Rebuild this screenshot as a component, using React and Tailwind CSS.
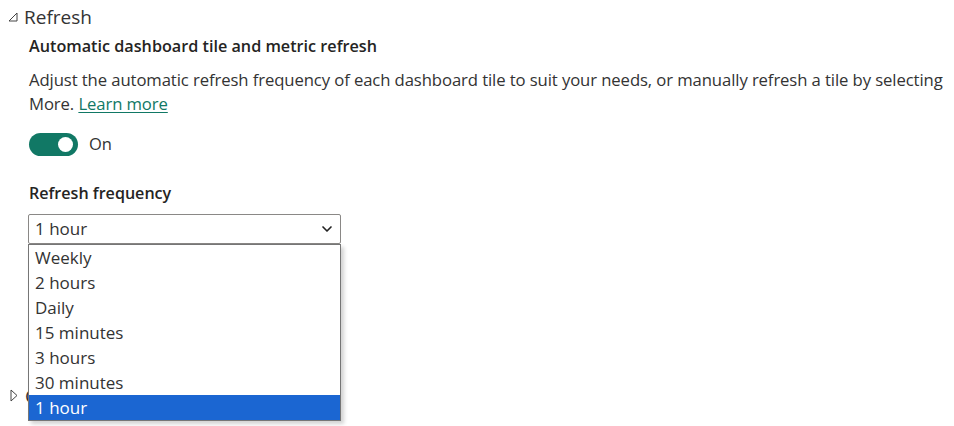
import React, { useState } from "react";
import { ChevronDown } from "lucide-react";

const OPTIONS = ["Weekly", "2 hours", "Daily", "15 minutes", "3 hours", "30 minutes", "1 hour"];

function ExpandedCaret() {
  return (
    <svg width="10" height="10" viewBox="0 0 10 10" className="shrink-0">
      <polygon points="9,1 9,9 1,9" fill="none" stroke="#444" strokeWidth="1" strokeLinejoin="round" />
    </svg>
  );
}

function CollapsedCaret() {
  return (
    <svg width="8" height="13" viewBox="0 0 8 13" className="shrink-0">
      <polygon points="1,1 7,6.5 1,12" fill="none" stroke="#444" strokeWidth="1" strokeLinejoin="round" />
    </svg>
  );
}

export default function App() {
  const [on, setOn] = useState(true);
  const [value, setValue] = useState("1 hour");

  return (
    <div
      className="relative w-[954px] h-[426px] overflow-hidden bg-white text-[#333]"
      style={{ fontFamily: '"Segoe UI", "Open Sans", "Noto Sans", sans-serif' }}
    >
      {/* Refresh section */}
      <div className="flex items-center gap-[6px] pl-[8px] pt-[3px] h-[30px]">
        <ExpandedCaret />
        <span className="text-[19px] leading-[26px] text-[#333]">Refresh</span>
      </div>

      <div className="pl-[29px] pr-[4px]">
        <h3 className="mt-[5px] text-[16.2px] leading-[22px] font-semibold text-[#252423]">
          Automatic dashboard tile and metric refresh
        </h3>
        <p className="mt-[11px] text-[16.7px] leading-[24px] text-[#333] tracking-[-0.1px] whitespace-nowrap">
          Adjust the automatic refresh frequency of each dashboard tile to suit your needs, or manually refresh a tile by selecting
          <br />
          More.{" "}
          <a href="#" className="text-[#117865] underline underline-offset-2">Learn more</a>
        </p>

        <div className="mt-[16px] flex items-center gap-[11px]">
          <button
            onClick={() => setOn(v => !v)}
            className="flex items-center justify-end w-[49px] h-[23px] rounded-full bg-[#117865] px-[5px]"
          >
            <span className="block w-[15px] h-[15px] rounded-full bg-white" />
          </button>
          <span className="text-[16.5px] text-[#333]">{on ? "On" : "Off"}</span>
        </div>

        <div className="mt-[25px] text-[16.1px] leading-[22px] font-semibold text-[#252423]">Refresh frequency</div>

        <div className="relative mt-[10px] -ml-px w-[313px]">
          <div className="flex items-center justify-between h-[30px] border border-[#8a8886] rounded-[2px] pl-[6px] pr-[5px] bg-white">
            <span className="text-[17px] text-[#333]">{value}</span>
            <ChevronDown size={16} strokeWidth={2.5} className="text-[#222]" />
          </div>

          <ul className="absolute left-0 top-full z-10 w-[313px] border border-[#767676] bg-white shadow-[3px_3px_4px_rgba(0,0,0,0.18)]">
            {OPTIONS.map(opt => (
              <li
                key={opt}
                onClick={() => setValue(opt)}
                className={`h-[25px] leading-[25px] pl-[6px] text-[17px] ${opt === value ? "bg-[#1b66d2] text-white" : "text-[#333]"}`}
              >
                {opt}
              </li>
            ))}
          </ul>
        </div>
      </div>

      {/* Comments section, behind the open list */}
      <div className="mt-[139px] flex items-center gap-[7px] pl-[10px]">
        <CollapsedCaret />
        <span className="text-[19px] leading-[26px] text-[#333]">Comments</span>
      </div>
    </div>
  );
}
